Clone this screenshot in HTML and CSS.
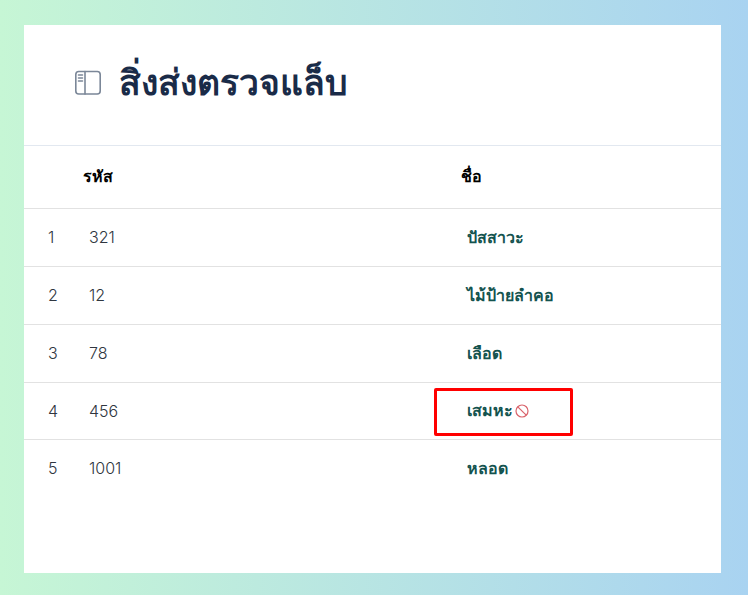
FILE: index.html
```html
<!DOCTYPE html>
<html lang="th">
<head>
<meta charset="utf-8">
<title>สิ่งส่งตรวจแล็บ</title>
<link rel="stylesheet" href="styles.css">
</head>
<body>
<main class="card">
  <header class="card-head">
    <svg class="head-icon" viewBox="0 0 28 26" width="28" height="26" fill="none" stroke="#7b8798" stroke-width="1.600" stroke-linecap="round" stroke-linejoin="round">
      <rect x="1.800" y="1.500" width="24.400" height="22.500" rx="3"/>
      <path d="M11 1.500v22.500"/>
      <path d="M4.500 5h4M4.500 8h4M4.500 11h4"/>
    </svg>
    <h1 class="title">สิ่งส่งตรวจแล็บ</h1>
  </header>
  <table class="lab-table">
    <thead>
      <tr class="head-row">
        <th class="col-index"></th>
        <th class="col-code">รหัส</th>
        <th class="col-name">ชื่อ</th>
      </tr>
    </thead>
    <tbody>
      <tr><td class="cell-index">1</td><td class="cell-code">321</td><td class="cell-name">ปัสสาวะ</td></tr>
      <tr><td class="cell-index">2</td><td class="cell-code">12</td><td class="cell-name">ไม้ป้ายลำคอ</td></tr>
      <tr><td class="cell-index">3</td><td class="cell-code">78</td><td class="cell-name">เลือด</td></tr>
      <tr class="row-short"><td class="cell-index">4</td><td class="cell-code">456</td><td class="cell-name"><span class="flagged">เสมหะ<svg class="ban-icon" viewBox="0 0 14 14" width="14" height="14" fill="none" stroke="#d9636b" stroke-width="1.200"><circle cx="7" cy="7" r="6"/><path d="M2.800 2.800l8.400 8.400"/></svg><span class="highlight"></span></span></td></tr>
      <tr><td class="cell-index">5</td><td class="cell-code">1001</td><td class="cell-name">หลอด</td></tr>
    </tbody>
  </table>
</main>
</body>
</html>
```

FILE: styles.css
```css
* { box-sizing: border-box; }
html, body { height: 100%; }
body {
  margin: 0;
  padding: 25px 27px 22px 24px;
  background: linear-gradient(90deg, #c6f6d5 0%, #a9d3f1 100%);
  font-family: "Inter", "Noto Sans", "Noto Sans CJK SC", sans-serif;
  overflow: hidden;
}
.card {
  background: #fff;
  height: 548px;
  width: 697px;
}
.card-head {
  height: 121px;
  border-bottom: 1px solid #e2e8f0;
  display: flex;
  align-items: center;
  gap: 17px;
  padding: 0 0 5px 50px;
}
.head-icon { flex: none; }
.title {
  margin: 0;
  font-size: 35.500px;
  font-weight: 700;
  color: #1a2b48;
  line-height: 40px;
}
.lab-table {
  width: 100%;
  border-collapse: collapse;
  table-layout: fixed;
}
.col-index { width: 59px; }
.col-code { width: 378px; }
.head-row { height: 62px; }
.lab-table th {
  text-align: left;
  font-size: 16px;
  font-weight: 700;
  color: #000;
  padding: 0;
}
.lab-table tr { border-bottom: 1px solid #e2e2e2; }
.lab-table tbody tr { height: 58px; }
.lab-table tbody tr.row-short { height: 57px; }
.lab-table tbody tr:last-child { border-bottom: 0; }
.cell-index, .cell-code {
  font-size: 16px;
  font-weight: 300;
  color: #2f3640;
}
.cell-index { padding: 0 0 0 24px; }
.cell-code { padding: 0 0 0 6px; }
.cell-name {
  font-size: 16px;
  font-weight: 600;
  color: #14534f;
  padding: 0 0 0 6px;
}
.flagged {
  position: relative;
  display: inline-flex;
  align-items: center;
  gap: 2px;
}
.ban-icon { flex: none; }
.highlight {
  position: absolute;
  left: -33px;
  top: -10px;
  width: 139px;
  height: 48px;
  border: 3px solid #f00;
  border-radius: 2px;
}
```
